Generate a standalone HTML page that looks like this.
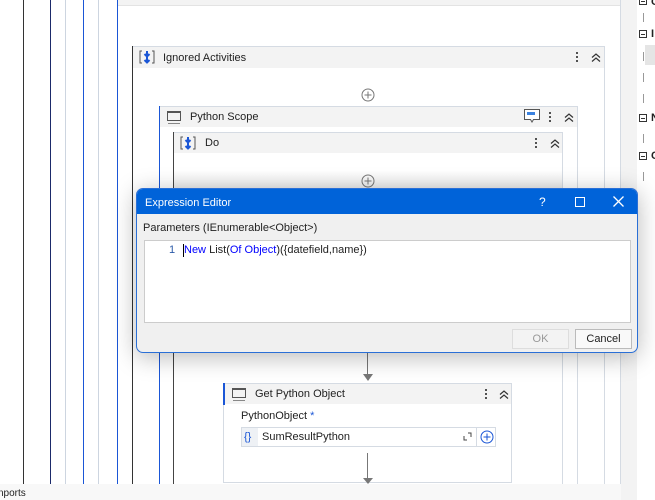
<!DOCTYPE html>
<html><head><style>
*{margin:0;padding:0;box-sizing:border-box}
body{width:655px;height:500px;overflow:hidden;background:#fff;font-family:"Liberation Sans",sans-serif;font-size:11px;color:#222;position:relative}
.a{position:absolute}
.v{position:absolute;top:0;width:1px;height:484px}
.hdr{position:absolute;background:#f3f3f3}
.t{position:absolute;font-size:11px;color:#222;white-space:nowrap}
.dots{position:absolute;width:2px;height:12px;background:radial-gradient(circle,#444 1px,transparent 1.2px) 0 0/2px 4px}
svg{position:absolute}
.bx{position:absolute;width:8px;height:8px;border:1px solid #333}
.bx:after{content:"";position:absolute;left:1px;top:2.5px;width:4px;height:1px;background:#333}
.lf{position:absolute;left:643px;width:6px;height:9px;border-left:1px solid #999}
</style></head><body>
<div class="a" style="left:118px;top:0;width:502px;height:6px;background:#f3f3f3;border-bottom:1px solid #e3e3e3"></div>
<div class="v" style="left:23px;background:#333"></div>
<div class="v" style="left:50px;background:#1b2a6a"></div>
<div class="v" style="left:65px;background:#cdd5e0"></div>
<div class="v" style="left:83px;background:#1a56d6"></div>
<div class="v" style="left:98px;background:#cdd5e0"></div>
<div class="v" style="left:117px;background:#1a56d6"></div>
<div class="v" style="left:620px;background:#d5dbe3"></div>
<div class="v" style="left:604px;top:46px;height:438px;background:#d5dbe3"></div>
<div class="v" style="left:577px;top:106px;height:378px;background:#d5dbe3"></div>
<div class="v" style="left:562px;top:132px;height:352px;background:#d5dbe3"></div>
<!-- ignored activities -->
<div class="a" style="left:132px;top:46px;width:473px;height:1px;background:#d5dbe3"></div>
<div class="v" style="left:132px;top:46px;height:438px;background:#333"></div>
<div class="hdr" style="left:133px;top:47px;width:471px;height:21px"></div>
<svg style="left:139px;top:50px" width="16" height="14" viewBox="0 0 16 14"><path d="M3 1H1V13H3M13 1H15V13H13" fill="none" stroke="#555"/><path d="M8 1V6M5.5 4L8 6.5 10.5 4M8 7V12M5.5 10L8 12.5 10.5 10" fill="none" stroke="#1a56d6" stroke-width="2"/></svg>
<div class="t" style="left:163px;top:52px">Ignored Activities</div>
<div class="dots" style="left:576px;top:51px"></div>
<svg style="left:591px;top:53px" width="10" height="9"><path d="M1 4.5L5 1 9 4.5M1 8.5L5 5 9 8.5" fill="none" stroke="#333" stroke-width="1.2"/></svg>
<svg style="left:361px;top:88px" width="14" height="14"><circle cx="7" cy="7" r="6" fill="none" stroke="#777"/><path d="M7 3.5V10.5M3.5 7H10.5" stroke="#777"/></svg>
<!-- python scope -->
<div class="a" style="left:159px;top:106px;width:419px;height:1px;background:#d5dbe3"></div>
<div class="v" style="left:159px;top:106px;height:378px;background:#1a56d6"></div>
<div class="hdr" style="left:160px;top:107px;width:417px;height:20px"></div>
<div class="a" style="left:167px;top:111px;width:14px;height:10px;border:1px solid #555;border-top-width:2px"></div>
<div class="a" style="left:168px;top:123px;width:12px;height:1px;background:#888"></div>
<div class="t" style="left:190px;top:111px">Python Scope</div>
<svg style="left:524px;top:109px" width="16" height="15"><path d="M0.5 0.5H15.5V10.5H9.5L8 13 6.5 10.5H0.5Z" fill="#fff" stroke="#555"/><rect x="3" y="3" width="8" height="3" fill="#3b82e0"/></svg>
<div class="dots" style="left:549px;top:111px"></div>
<svg style="left:564px;top:113px" width="10" height="9"><path d="M1 4.5L5 1 9 4.5M1 8.5L5 5 9 8.5" fill="none" stroke="#333" stroke-width="1.2"/></svg>
<!-- do -->
<div class="a" style="left:173px;top:132px;width:390px;height:1px;background:#d5dbe3"></div>
<div class="v" style="left:173px;top:132px;height:352px;background:#444"></div>
<div class="hdr" style="left:174px;top:133px;width:388px;height:20px"></div>
<svg style="left:180px;top:136px" width="16" height="14" viewBox="0 0 16 14"><path d="M3 1H1V13H3M13 1H15V13H13" fill="none" stroke="#555"/><path d="M8 1V6M5.5 4L8 6.5 10.5 4M8 7V12M5.5 10L8 12.5 10.5 10" fill="none" stroke="#1a56d6" stroke-width="2"/></svg>
<div class="t" style="left:205px;top:137px">Do</div>
<div class="dots" style="left:535px;top:137px"></div>
<svg style="left:550px;top:139px" width="10" height="9"><path d="M1 4.5L5 1 9 4.5M1 8.5L5 5 9 8.5" fill="none" stroke="#333" stroke-width="1.2"/></svg>
<div class="a" style="left:174px;top:153px;width:388px;height:35px;background:linear-gradient(#fff 50%,#ececec)"></div>
<svg style="left:361px;top:174px" width="14" height="14"><circle cx="7" cy="7" r="6" fill="none" stroke="#777"/><path d="M7 3.5V10.5M3.5 7H10.5" stroke="#777"/></svg>
<!-- get python object -->
<div class="a" style="left:367px;top:352px;width:1px;height:24px;background:#777"></div>
<div class="a" style="left:363px;top:374px;border-left:5px solid transparent;border-right:5px solid transparent;border-top:7px solid #777"></div>
<div class="a" style="left:223px;top:383px;width:289px;height:100px;border:1px solid #d5dbe3;background:#fff"></div>
<div class="hdr" style="left:224px;top:384px;width:287px;height:20px"></div>
<div class="a" style="left:223px;top:383px;width:2px;height:22px;background:#1a56d6"></div>
<div class="a" style="left:232px;top:388px;width:14px;height:10px;border:1px solid #555;border-top-width:2px"></div>
<div class="a" style="left:233px;top:400px;width:12px;height:1px;background:#888"></div>
<div class="t" style="left:255px;top:388px">Get Python Object</div>
<div class="dots" style="left:485px;top:388px"></div>
<svg style="left:499px;top:390px" width="10" height="9"><path d="M1 4.5L5 1 9 4.5M1 8.5L5 5 9 8.5" fill="none" stroke="#333" stroke-width="1.2"/></svg>
<div class="t" style="left:241px;top:410px">PythonObject <span style="color:#1a56d6">*</span></div>
<div class="a" style="left:241px;top:427px;width:255px;height:20px;border:1px solid #d5dbe3;background:#fff"></div>
<div class="a" style="left:242px;top:428px;width:16px;height:18px;background:#eef1f5"></div>
<div class="t" style="left:244px;top:431px;color:#1a56d6">{}</div>
<div class="t" style="left:262px;top:431px">SumResultPython</div>
<svg style="left:463px;top:432px" width="9" height="9"><path d="M1 4V8H4M5 1H8V5" fill="none" stroke="#444"/></svg>
<div class="a" style="left:476px;top:428px;width:1px;height:18px;background:#d5dbe3"></div>
<svg style="left:480px;top:430px" width="14" height="14"><circle cx="7" cy="7" r="6" fill="none" stroke="#1a56d6"/><path d="M7 3.5V10.5M3.5 7H10.5" stroke="#1a56d6"/></svg>
<div class="a" style="left:367px;top:453px;width:1px;height:26px;background:#777"></div>
<div class="a" style="left:363px;top:478px;border-left:5px solid transparent;border-right:5px solid transparent;border-top:6px solid #777"></div>
<!-- bottom bar -->
<div class="a" style="left:0;top:484px;width:630px;height:16px;background:#f8f8f8"></div>
<div class="t" style="left:-2px;top:488px;font-size:10px">nports</div>
<!-- right panel -->
<div class="a" style="left:621px;top:0;width:16px;height:500px;background:#f3f3f3"></div>
<div class="a" style="left:637px;top:0;width:18px;height:500px;background:#fff"></div>
<div class="bx" style="left:639px;top:-3px"></div>
<div class="bx" style="left:639px;top:30px"></div>
<div class="bx" style="left:639px;top:114px"></div>
<div class="bx" style="left:639px;top:152px"></div>
<div class="t" style="left:651px;top:-4px;font-weight:bold">C</div>
<div class="t" style="left:651px;top:28px;font-weight:bold">I</div>
<div class="t" style="left:651px;top:112px;font-weight:bold">N</div>
<div class="t" style="left:651px;top:150px;font-weight:bold">C</div>
<div class="a" style="left:645px;top:45px;width:10px;height:20px;background:#e5e5e5"></div>
<div class="lf" style="top:13px"></div><div class="lf" style="top:52px"></div><div class="lf" style="top:73px"></div><div class="lf" style="top:94px"></div><div class="lf" style="top:134px"></div><div class="lf" style="top:172px"></div>
<!-- dialog -->
<div class="a" style="left:136px;top:188px;width:502px;height:165px;background:#f0f0f0;border:1px solid #2a6fd6;border-radius:7px;box-shadow:0 4px 24px rgba(0,0,0,.28);overflow:hidden">
 <div style="height:25px;background:#0063d9;color:#fff;font-size:11px;padding:8px 0 0 8px">Expression Editor
  <span style="position:absolute;left:402px;top:6px;font-size:12px">?</span>
  <span style="position:absolute;left:438px;top:8px;width:10px;height:10px;border:1.3px solid #fff"></span>
  <svg style="left:476px;top:7px" width="11" height="11"><path d="M0.5 0.5L10.5 10.5M10.5 0.5L0.5 10.5" stroke="#fff" stroke-width="1.3"/></svg>
 </div>
 <div class="t" style="left:6px;top:33px">Parameters (IEnumerable&lt;Object&gt;)</div>
 <div class="a" style="left:7px;top:51px;width:487px;height:83px;background:#fff;border:1px solid #ccc"></div>
 <div class="t" style="left:32px;top:55px;color:#2b5aa8">1</div>
 <div class="a" style="left:46px;top:55px;width:1px;height:13px;background:#000"></div>
 <div class="t" style="left:47px;top:55px"><span style="color:#0000ff">New</span> List(<span style="color:#0000ff">Of Object</span>)({datefield,name})</div>
 <div class="a" style="left:375px;top:140px;width:57px;height:20px;border:1px solid #ddd;background:#f3f3f3;color:#999;text-align:center;line-height:18px">OK</div>
 <div class="a" style="left:438px;top:140px;width:57px;height:20px;border:1px solid #bbb;background:#f9f9f9;text-align:center;line-height:18px">Cancel</div>
</div>
</body></html>
